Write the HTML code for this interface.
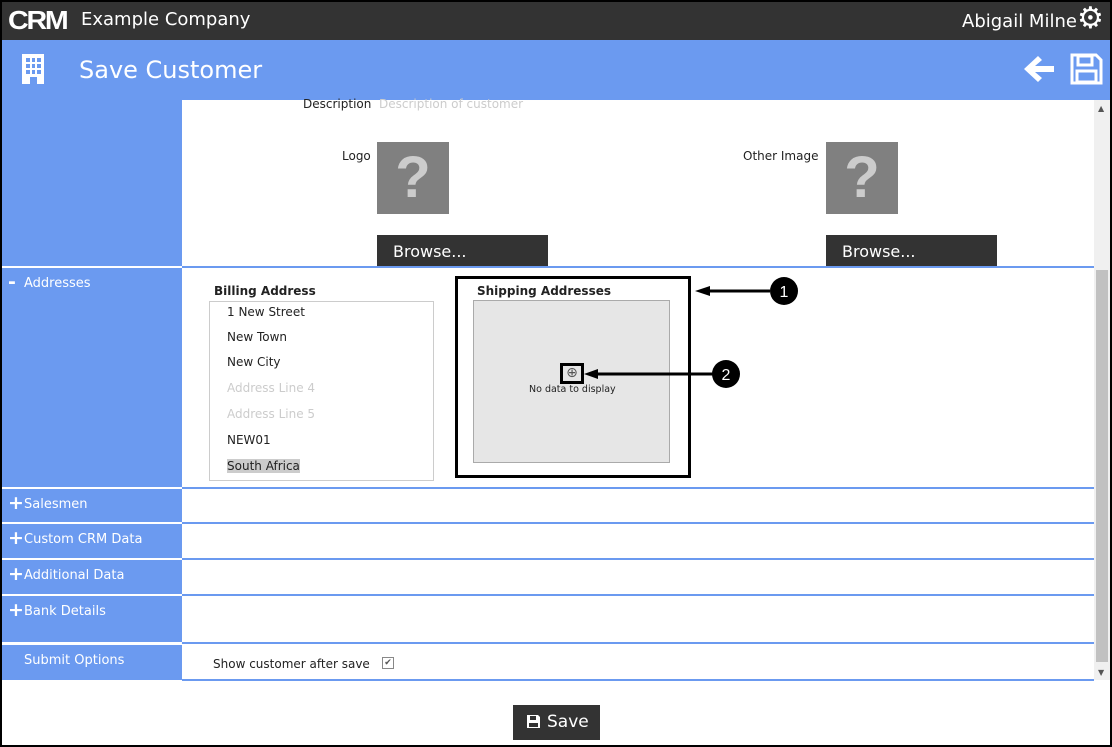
<!DOCTYPE html>
<html><head><style>
*{margin:0;padding:0;box-sizing:border-box}
body{width:1112px;height:747px;position:relative;overflow:hidden;background:#fff;font-family:"DejaVu Sans","Liberation Sans",sans-serif}
.a{position:absolute}
.lb{position:absolute;left:2px;width:180px;background:#6b9af0;color:#fff;font-size:13px}
.lb span{position:absolute;left:22px;top:8px}
.lb i{position:absolute;left:6px;top:3px;font-style:normal;font-size:19px;font-weight:bold}
.bl{position:absolute;left:182px;width:912px;height:2px;background:#6b9af0}
.t{position:absolute;font-size:12px;color:#222}
</style></head><body>
<div class="a" style="left:0;top:0;width:1112px;height:747px;border:2px solid #000;z-index:50;pointer-events:none"></div>
<div class="a" style="left:0;top:0;width:1112px;height:40px;background:#333"></div>
<div class="a" style="left:8px;top:5px;color:#fff;font:bold 26px 'Liberation Sans',sans-serif;letter-spacing:-2px;transform:scaleX(1.1);transform-origin:left">CRM</div>
<div class="a" style="left:81px;top:9px;color:#fff;font-size:18px">Example Company</div>
<div class="a" style="left:962px;top:11px;color:#fff;font-size:18px">Abigail Milne</div>
<div class="a" style="left:1077px;top:2px;color:#fff;font-size:30px;line-height:34px">⚙</div>
<div class="a" style="left:0;top:40px;width:1112px;height:60px;background:#6b9af0"></div>
<svg class="a" style="left:20px;top:54px" width="26" height="30" viewBox="0 0 26 30"><rect x="2" y="0" width="22" height="30" fill="#fff"/><g fill="#6b9af0"><rect x="6" y="4" width="4" height="4"/><rect x="12" y="4" width="3" height="4"/><rect x="17" y="4" width="4" height="4"/><rect x="6" y="10" width="4" height="4"/><rect x="12" y="10" width="3" height="4"/><rect x="17" y="10" width="4" height="4"/><rect x="6" y="16" width="4" height="4"/><rect x="12" y="16" width="3" height="4"/><rect x="17" y="16" width="4" height="4"/><rect x="10" y="23" width="7" height="7"/></g></svg>
<div class="a" style="left:79px;top:56px;color:#fff;font-size:24px">Save Customer</div>
<svg class="a" style="left:1022px;top:54px" width="34" height="30" viewBox="0 0 34 30"><path d="M2 15 L16 2 L20 6 L13 12 L32 12 L32 18 L13 18 L20 24 L16 28 Z" fill="#fff"/></svg>
<svg class="a" style="left:1070px;top:53px" width="33" height="32" viewBox="0 0 33 32"><path d="M2 2 H26 L31 7 V30 H2 Z" fill="none" stroke="#fff" stroke-width="3"/><rect x="8" y="3" width="14" height="9" fill="none" stroke="#fff" stroke-width="3"/><rect x="7" y="18" width="19" height="11" fill="none" stroke="#fff" stroke-width="3"/></svg>

<div class="lb" style="top:100px;height:166px"></div>
<div class="lb" style="top:268px;height:219px"><i>-</i><span>Addresses</span></div>
<div class="lb" style="top:489px;height:33px"><i>+</i><span>Salesmen</span></div>
<div class="lb" style="top:524px;height:34px"><i>+</i><span>Custom CRM Data</span></div>
<div class="lb" style="top:560px;height:34px"><i>+</i><span>Additional Data</span></div>
<div class="lb" style="top:596px;height:46px"><i>+</i><span>Bank Details</span></div>
<div class="lb" style="top:645px;height:35px"><span>Submit Options</span></div>
<div class="bl" style="top:266px"></div><div class="bl" style="top:487px"></div><div class="bl" style="top:522px"></div><div class="bl" style="top:558px"></div><div class="bl" style="top:594px"></div><div class="bl" style="top:642px"></div><div class="bl" style="top:679px"></div>

<div class="a" style="left:1094px;top:100px;width:16px;height:580px;background:#f0f0f0"></div>
<div class="a" style="left:1096px;top:270px;width:12px;height:392px;background:#c1c1c1"></div>
<div class="a" style="left:1098px;top:104px;font-size:8px;color:#555">▲</div>
<div class="a" style="left:1098px;top:668px;font-size:8px;color:#555">▼</div>

<div class="t" style="left:303px;top:97px">Description</div>
<div class="t" style="left:379px;top:97px;color:#ccc">Description of customer</div>
<div class="t" style="left:342px;top:149px">Logo</div>
<div class="t" style="left:743px;top:149px">Other Image</div>
<div class="a" style="left:377px;top:142px;width:72px;height:72px;background:#808080;color:#ccc;font:bold 58px 'Liberation Sans',sans-serif;text-align:center;line-height:72px">?</div>
<div class="a" style="left:826px;top:142px;width:72px;height:72px;background:#808080;color:#ccc;font:bold 58px 'Liberation Sans',sans-serif;text-align:center;line-height:72px">?</div>
<div class="a" style="left:377px;top:235px;width:171px;height:31px;background:#333;color:#fff;font-size:16px;padding:7px 0 0 16px">Browse...</div>
<div class="a" style="left:826px;top:235px;width:171px;height:31px;background:#333;color:#fff;font-size:16px;padding:7px 0 0 16px">Browse...</div>

<div class="t" style="left:214px;top:284px;font-weight:bold;font-size:12px">Billing Address</div>
<div class="a" style="left:209px;top:301px;width:225px;height:180px;border:1px solid #ccc"></div>
<div class="t" style="left:227px;top:305px">1 New Street</div>
<div class="t" style="left:227px;top:330px">New Town</div>
<div class="t" style="left:227px;top:355px">New City</div>
<div class="t" style="left:227px;top:381px;color:#ccc">Address Line 4</div>
<div class="t" style="left:227px;top:407px;color:#ccc">Address Line 5</div>
<div class="t" style="left:227px;top:433px">NEW01</div>
<div class="t" style="left:227px;top:459px;background:#ccc">South Africa</div>

<div class="a" style="left:455px;top:276px;width:236px;height:202px;border:3px solid #000"></div>
<div class="t" style="left:477px;top:284px;font-weight:bold">Shipping Addresses</div>
<div class="a" style="left:473px;top:300px;width:197px;height:163px;background:#e6e6e6;border:1px solid #aaa"></div>
<div class="a" style="left:560px;top:363px;width:24px;height:21px;border:3px solid #000;background:#e6e6e6;font-size:14px;text-align:center;line-height:15px;color:#555">⊕</div>
<div class="a" style="left:529px;top:384px;font-size:9.5px;color:#222">No data to display</div>
<svg class="a" style="left:580px;top:276px" width="230" height="112"><line x1="705" y1="15" x2="770" y2="15" stroke="#000" stroke-width="3" transform="translate(-580,0)"/><path d="M115 15 L130 10 L130 20 Z" fill="#000"/><circle cx="204" cy="15" r="14" fill="#000"/><text x="204" y="21" font-size="16" fill="#fff" text-anchor="middle" font-family="Liberation Sans">1</text><line x1="10" y1="98" x2="135" y2="98" stroke="#000" stroke-width="3"/><path d="M4 98 L18 93 L18 103 Z" fill="#000"/><circle cx="146" cy="98" r="14" fill="#000"/><text x="146" y="104" font-size="16" fill="#fff" text-anchor="middle" font-family="Liberation Sans">2</text></svg>

<div class="t" style="left:213px;top:657px">Show customer after save</div>
<div class="a" style="left:382px;top:657px;width:12px;height:12px;border:1px solid #888;font-size:9px;line-height:10px;text-align:center;color:#555">✔</div>

<div class="a" style="left:513px;top:705px;width:87px;height:35px;background:#333;color:#fff;font-size:17px;padding:7px 0 0 34px">Save</div>
<svg class="a" style="left:526px;top:714px" width="15" height="15" viewBox="0 0 15 15"><path d="M1 1 H12 L14 3 V14 H1 Z" fill="#fff"/><rect x="4" y="2" width="6" height="4" fill="#333"/><rect x="3" y="9" width="9" height="4" fill="#333"/></svg>
</body></html>
